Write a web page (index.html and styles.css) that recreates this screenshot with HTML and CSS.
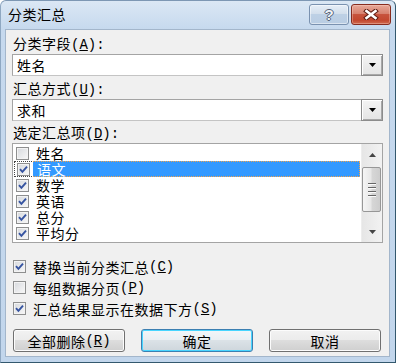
FILE: index.html
```html
<!DOCTYPE html>
<html lang="zh-CN">
<head>
  <meta charset="UTF-8">
  <title>分类汇总</title>
  <link rel="stylesheet" href="styles.css">
</head>
<body>
  <div class="window">
    <div class="titlebar">
      <span class="title">分类汇总</span>
      <div class="caption">
        <div class="cap help"><span>?</span></div>
        <div class="cap close">
          <svg width="16" height="11" viewBox="0 0 16 11">
            <path d="M3.5 2 L12.5 9 M12.5 2 L3.5 9" stroke="#5e1c12" stroke-width="4.6" stroke-linecap="square" fill="none"/>
            <path d="M3.5 2 L12.5 9 M12.5 2 L3.5 9" stroke="#fff" stroke-width="2.6" stroke-linecap="square" fill="none"/>
          </svg>
        </div>
      </div>
    </div>

    <div class="client">
      <div class="label">分类字段<span class="key">(<u>A</u>):</span></div>
      <div class="combo first">
        <span class="combo-value">姓名</span>
        <span class="drop"><svg width="7" height="4" viewBox="0 0 7 4"><polygon points="0,0 7,0 3.5,4" fill="#000"/></svg></span>
      </div>

      <div class="label">汇总方式<span class="key">(<u>U</u>):</span></div>
      <div class="combo">
        <span class="combo-value">求和</span>
        <span class="drop"><svg width="7" height="4" viewBox="0 0 7 4"><polygon points="0,0 7,0 3.5,4" fill="#000"/></svg></span>
      </div>

      <div class="label">选定汇总项<span class="key">(<u>D</u>):</span></div>
      <div class="list">
        <div class="items">
          <div class="item"><span class="check"></span><span class="item-text">姓名</span></div>
          <div class="item focus"><span class="check on"><svg width="11" height="11" viewBox="0 0 11 11"><path d="M2 5.2 L4.4 7.8 L9 2.6" stroke="#3553a0" stroke-width="1.9" fill="none"/></svg></span><span class="item-text">语文</span></div>
          <div class="item"><span class="check on"><svg width="11" height="11" viewBox="0 0 11 11"><path d="M2 5.2 L4.4 7.8 L9 2.6" stroke="#3553a0" stroke-width="1.9" fill="none"/></svg></span><span class="item-text">数学</span></div>
          <div class="item"><span class="check on"><svg width="11" height="11" viewBox="0 0 11 11"><path d="M2 5.2 L4.4 7.8 L9 2.6" stroke="#3553a0" stroke-width="1.9" fill="none"/></svg></span><span class="item-text">英语</span></div>
          <div class="item"><span class="check on"><svg width="11" height="11" viewBox="0 0 11 11"><path d="M2 5.2 L4.4 7.8 L9 2.6" stroke="#3553a0" stroke-width="1.9" fill="none"/></svg></span><span class="item-text">总分</span></div>
          <div class="item"><span class="check on"><svg width="11" height="11" viewBox="0 0 11 11"><path d="M2 5.2 L4.4 7.8 L9 2.6" stroke="#3553a0" stroke-width="1.9" fill="none"/></svg></span><span class="item-text">平均分</span></div>
        </div>
        <div class="scrollbar">
          <span class="sb-arrow"><svg width="7" height="4" viewBox="0 0 7 4"><polygon points="3.5,0 7,4 0,4" fill="#444"/></svg></span>
          <span class="sb-track"><span class="sb-thumb"><span class="grip"></span></span></span>
          <span class="sb-arrow"><svg width="7" height="4" viewBox="0 0 7 4"><polygon points="0,0 7,0 3.5,4" fill="#444"/></svg></span>
        </div>
      </div>

      <div class="options">
        <div class="option"><span class="check on"><svg width="11" height="11" viewBox="0 0 11 11"><path d="M2 5.2 L4.4 7.8 L9 2.6" stroke="#3553a0" stroke-width="1.9" fill="none"/></svg></span>替换当前分类汇总<span class="key">(<u>C</u>)</span></div>
        <div class="option"><span class="check"></span>每组数据分页<span class="key">(<u>P</u>)</span></div>
        <div class="option"><span class="check on"><svg width="11" height="11" viewBox="0 0 11 11"><path d="M2 5.2 L4.4 7.8 L9 2.6" stroke="#3553a0" stroke-width="1.9" fill="none"/></svg></span>汇总结果显示在数据下方<span class="key">(<u>S</u>)</span></div>
      </div>

      <div class="buttons">
        <div class="btn">全部删除<span class="key">(<u>R</u>)</span></div>
        <div class="btn default">确定</div>
        <div class="btn">取消</div>
      </div>
    </div>
  </div>
</body>
</html>
```

FILE: styles.css
```css
* {
  margin: 0;
  padding: 0;
  box-sizing: border-box;
}
body {
  font-family: "Noto Sans CJK SC", sans-serif;
  font-size: 14px;
  color: #000;
  background: #fff;
}
.window {
  width: 396px;
  height: 363px;
  display: flex;
  flex-direction: column;
  background: linear-gradient(#dbe7f4, #c6d9ee 28px, #c2d6ec);
  border-top: 1px solid #7d97b3;
  border-left: 1px solid #8fa8c2;
  border-right: 1px solid #33586e;
  border-bottom: 1px solid #33586e;
  border-radius: 6px 6px 0 0;
  padding: 0 5px 5px 4px;
}
.titlebar {
  height: 28px;
  display: flex;
  justify-content: space-between;
}
.title {
  padding-left: 3px;
  line-height: 26px;
  letter-spacing: .5px;
}
.caption {
  display: flex;
  gap: 2px;
  padding-top: 3px;
  margin-right: -1px;
}
.cap {
  width: 40px;
  height: 21px;
  border-radius: 3px;
  display: flex;
  align-items: center;
  justify-content: center;
}
.help {
  border: 1px solid #7a92b0;
  background: linear-gradient(#e6eef7, #d3dfec 45%, #bdd0e5 50%, #b9cde3);
  box-shadow: inset 0 0 0 1px rgba(255, 255, 255, .5);
}
.help span {
  font-family: "Liberation Sans", sans-serif;
  font-weight: bold;
  font-size: 15px;
  color: #eef2f7;
  text-shadow: 1px 0 #55647a, -1px 0 #55647a, 0 1px #55647a, 0 -1px #55647a;
}
.close {
  border: 1px solid #872c1f;
  background: linear-gradient(#e7a899, #d7826f 45%, #c7533d 50%, #c3482f 80%, #cf6a4f);
  box-shadow: inset 0 0 0 1px rgba(255, 220, 210, .35);
}
.client {
  flex: 1;
  background: #f0f0f0;
  border: 1px solid #a3b6cb;
  padding: 2px 6px 0;
}
.label {
  height: 22px;
  line-height: 22px;
  padding-left: 1px;
  letter-spacing: .5px;
}
.key {
  font-family: "Liberation Mono", monospace;
  letter-spacing: 0;
}
.combo {
  height: 22px;
  display: flex;
  align-items: center;
  background: #fff;
  border: 1px solid #a4a4a4;
  border-bottom-color: #c4c4c4;
}
.combo.first {
  margin-bottom: 1px;
}
.combo-value {
  flex: 1;
  padding-left: 4px;
  letter-spacing: .5px;
}
.drop {
  width: 22px;
  height: 22px;
  margin: -1px -1px -1px 0;
  display: flex;
  align-items: center;
  justify-content: center;
  border: 1px solid #8c8c8c;
  background: linear-gradient(#f4f4f4, #e4e4e4);
  box-shadow: inset 1px 1px #fff, inset -1px -1px #a8a8a8;
}
.list {
  height: 100px;
  display: flex;
  background: #fff;
  border: 1px solid #a4a4a4;
}
.items {
  flex: 1;
  padding-top: 1px;
}
.item {
  height: 16px;
  display: flex;
  align-items: center;
  padding-left: 3px;
}
.item.focus {
  border: 1px dotted #444;
  border-right: 0;
  margin: 0 1px;
  padding-left: 2px;
}
.item-text {
  flex: 1;
  margin: 0 1px 0 3px;
  padding-left: 4px;
  line-height: 16px;
  letter-spacing: .5px;
}
.item.focus .item-text {
  align-self: stretch;
  margin: -1px 0 -1px 3px;
  line-height: 14px;
  color: #fff;
  background: #3399ff;
  border: 1px dotted #f0a24c;
  border-left: 0;
}
.check {
  width: 13px;
  height: 13px;
  flex: none;
  display: flex;
  align-items: center;
  justify-content: center;
  border: 1px solid #8e8f8f;
  background: linear-gradient(135deg, #d6d9dd, #f8f8f8);
  box-shadow: inset 0 0 0 1px #f3f3f3;
}
.scrollbar {
  width: 21px;
  display: flex;
  flex-direction: column;
  background: linear-gradient(90deg, #e6e6e6, #f2f2f2);
  border-left: 1px solid #ededed;
}
.sb-arrow {
  height: 21px;
  display: flex;
  align-items: center;
  justify-content: center;
}
.sb-track {
  flex: 1;
  padding: 2px 1px 0 0;
}
.sb-thumb {
  height: 45px;
  display: flex;
  align-items: center;
  justify-content: center;
  border: 1px solid #979797;
  border-radius: 2px;
  background: linear-gradient(90deg, #f5f5f5, #e8e8e8 45%, #d6d6d6 55%, #cdcdcd);
}
.grip {
  width: 8px;
  height: 14px;
  background: repeating-linear-gradient(#666 0 1px, #fbfbfb 1px 2px, transparent 2px 4px);
}
.options {
  margin-top: 13px;
}
.option {
  height: 21px;
  display: flex;
  align-items: center;
  padding-left: 1px;
  letter-spacing: .5px;
}
.option .check {
  margin-right: 7px;
}
.buttons {
  margin-top: 10px;
  padding-left: 1px;
  display: flex;
  gap: 16px;
}
.btn {
  width: 112px;
  height: 23px;
  display: flex;
  align-items: center;
  justify-content: center;
  letter-spacing: .5px;
  border: 1px solid #707070;
  border-radius: 3px;
  background: linear-gradient(#f2f2f2, #ebebeb 50%, #dddddd 50%, #cfcfcf);
  box-shadow: inset 0 0 0 1px #fcfcfc;
}
.btn.default {
  border-color: #3c7fb1;
  background: linear-gradient(#f2f6f9, #e9eef2 50%, #dbe2e7 50%, #ced6dc);
  box-shadow: inset 0 0 0 1px #48d5ff;
}
```
